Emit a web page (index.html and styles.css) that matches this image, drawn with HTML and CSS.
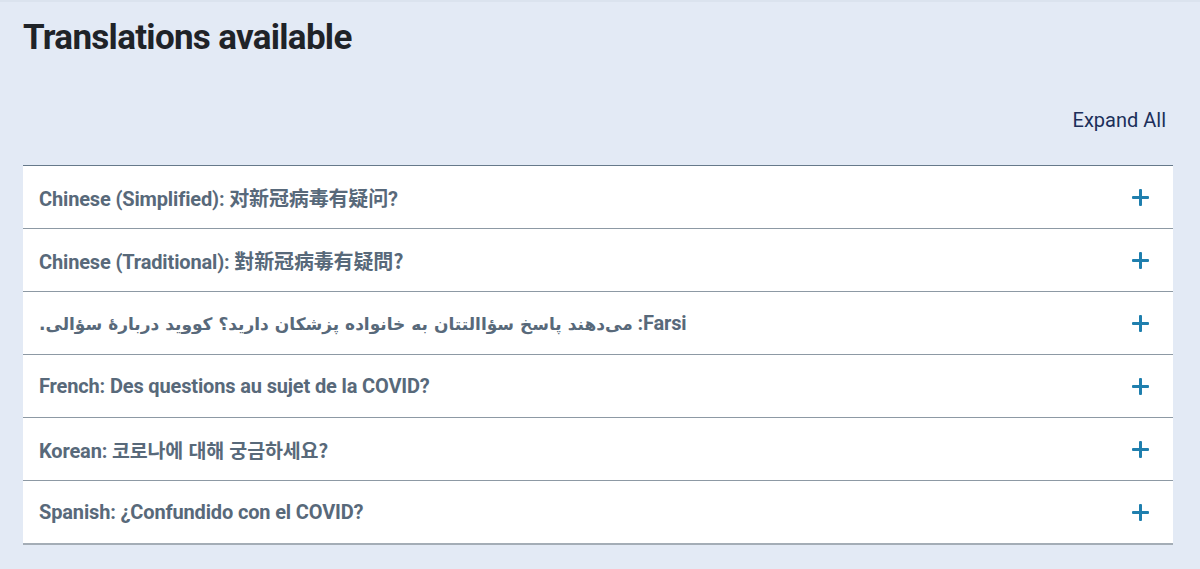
FILE: index.html
```html
<!DOCTYPE html>
<html lang="en">
<head>
<meta charset="utf-8">
<title>Translations available</title>
<link rel="stylesheet" href="styles.css">
</head>
<body>
<main class="page">
  <h2 class="title">Translations available</h2>
  <div class="toolbar"><button class="expand-all">Expand All</button></div>
  <ul class="accordion">
    <li class="item"><span class="label">Chinese (Simplified): <span lang="zh-CN">对新冠病毒有疑问?</span></span><span class="plus"></span></li>
    <li class="item"><span class="label">Chinese (Traditional): <span lang="zh-TW">對新冠病毒有疑問?</span></span><span class="plus"></span></li>
    <li class="item"><span class="label rtl" dir="rtl">Farsi: <span class="fa" lang="fa">می‌دهند پاسخ سؤاالتتان به خانواده پزشکان دارید؟ کووید دربارهٔ سؤالی.</span></span><span class="plus"></span></li>
    <li class="item"><span class="label">French: Des questions au sujet de la COVID?</span><span class="plus"></span></li>
    <li class="item"><span class="label">Korean: <span lang="ko">코로나에 대해 궁금하세요?</span></span><span class="plus"></span></li>
    <li class="item"><span class="label">Spanish: ¿Confundido con el COVID?</span><span class="plus"></span></li>
  </ul>
</main>
</body>
</html>
```

FILE: styles.css
```css
html, body {
  margin: 0;
  padding: 0;
  background: #e3eaf5;
}
body {
  border-top: 2px solid #dbe3ee;
  font-family: Roboto, "Liberation Sans", "Noto Sans CJK SC", "DejaVu Sans", sans-serif;
}
.page {
  padding: 0 27px 0 23px;
}
.title {
  margin: 0;
  padding-top: 14px;
  font-size: 35px;
  line-height: 44px;
  font-weight: 700;
  color: #1f2328;
  letter-spacing: -0.7px;
}
.toolbar {
  display: flex;
  justify-content: flex-end;
  padding-top: 48px;
  padding-right: 7px;
}
.expand-all {
  background: none;
  border: 0;
  padding: 0;
  font-family: Roboto, "Liberation Sans", sans-serif;
  font-size: 20px;
  line-height: 24px;
  color: #1c2f5a;
  cursor: pointer;
}
.accordion {
  list-style: none;
  margin: 33px 0 0;
  padding: 0;
  background: #fff;
  border-top: 1px solid #66798a;
  border-bottom: 2px solid #a4adb6;
}
.item {
  display: flex;
  align-items: center;
  justify-content: space-between;
  height: 62px;
  padding: 0 24px 0 16px;
  border-bottom: 1px solid #8d99a4;
}
.item:last-child {
  border-bottom: 0;
}
.label {
  font-size: 20px;
  font-weight: 700;
  letter-spacing: -0.15px;
  color: #58697a;
  font-family: Roboto, "Liberation Sans", "Noto Sans CJK SC", "Noto Sans CJK KR", "DejaVu Sans", sans-serif;
}
.label [lang="zh-TW"] { font-family: "Noto Sans CJK TC", sans-serif; }
.label [lang="ko"] { font-family: "Noto Sans CJK KR", sans-serif; font-size: 19.5px; }
.rtl {
  text-align: left;
}
.fa {
  font-family: "DejaVu Sans", sans-serif;
  font-size: 17px;
  letter-spacing: 0;
}
.plus {
  position: relative;
  width: 17px;
  height: 17px;
  flex: none;
}
.plus::before, .plus::after {
  content: "";
  position: absolute;
  background: #1f7fae;
  border-radius: 1px;
}
.plus::before {
  left: 0; right: 0; top: 7px; height: 3px;
}
.plus::after {
  top: 0; bottom: 0; left: 7px; width: 3px;
}
```
